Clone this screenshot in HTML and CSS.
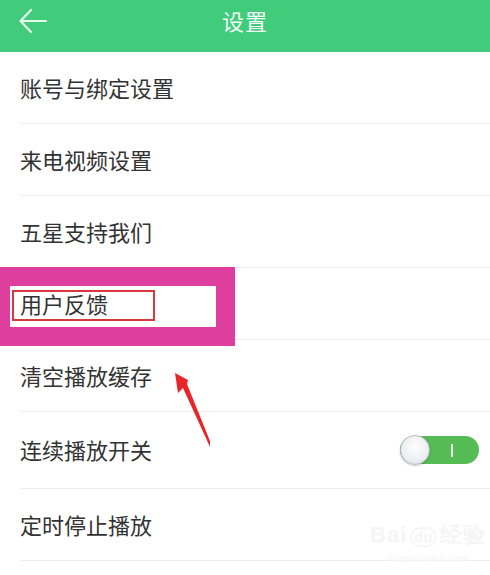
FILE: index.html
```html
<!DOCTYPE html>
<html lang="zh">
<head>
<meta charset="utf-8">
<link rel="stylesheet" href="styles.css">
</head>
<body>
<div class="screen">
  <header class="topbar">
    <svg class="back" width="30" height="26" viewBox="0 0 30 26"><path d="M28 13H3M13 2L2.5 13L13 24" fill="none" stroke="#e8fbef" stroke-width="2.2" stroke-linecap="round" stroke-linejoin="round"/></svg>
    <h1 class="title">设置</h1>
  </header>
  <ul class="list">
    <li class="row"><span>账号与绑定设置</span></li>
    <li class="row"><span>来电视频设置</span></li>
    <li class="row"><span>五星支持我们</span></li>
    <li class="row"><span>用户反馈</span></li>
    <li class="row"><span>清空播放缓存</span></li>
    <li class="row row-toggle"><span>连续播放开关</span>
      <div class="toggle"><div class="knob"></div><div class="on-mark"></div></div>
    </li>
    <li class="row"><span>定时停止播放</span></li>
  </ul>

  <div class="highlight"></div>
  <div class="redbox"></div>
  <svg class="arrow" width="60" height="90" viewBox="0 0 60 90">
    <polygon points="25,13 38,20 37,24 62,86 60,87 33,28 28,33" fill="#e8262a"/>
  </svg>
  <div class="watermark">
    <div class="wm-logo">Bai<span class="wm-du">du</span>经验</div>
    <div class="wm-url">jingyan.baidu.com</div>
  </div>
</div>
</body>
</html>
```
FILE: styles.css
```css
* { box-sizing: border-box; margin: 0; padding: 0; }
html, body { width: 490px; height: 575px; overflow: hidden; background: #fff; }
body { font-family: "Noto Sans CJK SC", "Noto Sans", sans-serif; }
.screen { position: relative; width: 490px; height: 575px; background: #fff; }
.topbar {
  height: 52px;
  background: #40cc7a;
  display: flex;
  align-items: center;
  justify-content: center;
  position: relative;
}
.back { position: absolute; left: 18px; top: 8px; }
.title { font-size: 22px; font-weight: 400; color: #f4fff8; letter-spacing: 1px; margin-top: -12px; }
.list { list-style: none; }
.row {
  height: 72px;
  margin-left: 20px;
  border-bottom: 1px solid #eeeeee;
  display: flex;
  align-items: center;
  font-size: 22px;
  color: #333;
}
.row span { margin-top: -2px; }
.row-toggle { height: 77px; justify-content: space-between; padding-right: 11px; }
.toggle {
  position: relative;
  width: 79px;
  height: 28px;
  border-radius: 14px;
  background: #55bb55;
}
.knob {
  position: absolute;
  left: 0; top: -1px;
  width: 30px; height: 30px;
  border-radius: 50%;
  background: radial-gradient(circle at 50% 40%, #ffffff 0%, #eceef3 60%, #d5d8de 100%);
  border: 1px solid #b8bcc2;
  box-shadow: 0 1px 2px rgba(0,0,0,0.2);
}
.on-mark {
  position: absolute;
  left: 51px; top: 8px;
  width: 2px; height: 13px;
  background: #e8ffe8;
}
.highlight {
  position: absolute;
  left: 0; top: 267px;
  width: 235px; height: 79px;
  border-style: solid;
  border-color: #de3f9e;
  border-width: 19px 19px 19px 10px;
}
.redbox {
  position: absolute;
  left: 12px; top: 290px;
  width: 143px; height: 31px;
  border: 2px solid #d63a3e;
}
.arrow { position: absolute; left: 150px; top: 360px; }
.watermark {
  position: absolute;
  left: 370px; top: 522px;
  color: #f5f5f5;
  text-align: center;
  font-family: "Liberation Sans", sans-serif;
}
.wm-logo { font-size: 22px; font-weight: 700; line-height: 26px; letter-spacing: 1px; }
.wm-du { font-size: 14px; border: 2px solid #f5f5f5; border-radius: 10px; padding: 0 2px; margin: 0 3px; }
.wm-url { font-size: 11px; font-family: "Liberation Serif", serif; line-height: 14px; }
```
